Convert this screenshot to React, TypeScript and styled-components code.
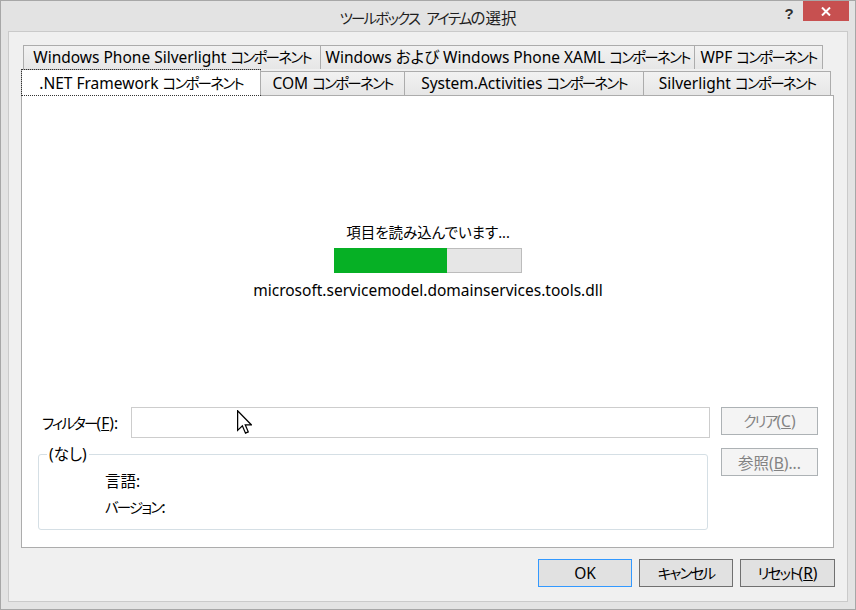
import React from 'react';
import styled, { createGlobalStyle } from 'styled-components';

const GlobalStyle = createGlobalStyle`
  html, body { margin: 0; padding: 0; background: #e3e3e3; }
  body {
    font-family: "Noto Sans", "Noto Sans CJK JP", sans-serif;
    font-size: 15.5px;
    color: #000;
    font-feature-settings: "palt";
  }
  * { box-sizing: border-box; }
`

// katakana in the Windows UI font is much narrower than Noto's, so runs of it get tightened
const Kana = styled.span`
  font-size: 14.5px;
  letter-spacing: -1.8px;
`
const jp = (s: string) => s.split(/([\u30A0-\u30FF]+)/).map((part, i) =>
  i % 2 ? <Kana key={i}>{part}</Kana> : part)

const Window = styled.div`
  width: 856px; height: 610px;
  border: 1px solid #a7a7a7;
  background: #e3e3e3;
  display: flex; flex-direction: column;
`

const TitleBar = styled.div`
  height: 30px; flex: none;
  display: grid;
  > * { grid-area: 1 / 1; }
`
const Title = styled.div`
  justify-self: center; align-self: center;
  padding-top: 2px;
  color: #1e1e1e;
  word-spacing: 3px;
`
const Controls = styled.div`
  justify-self: end; align-self: start;
  display: flex; margin-right: 6px;
`
const HelpButton = styled.div`
  width: 28px; height: 20px;
  display: flex; align-items: center; justify-content: center;
  font-family: "Liberation Sans", sans-serif;
  font-weight: bold; font-size: 15px; color: #303030;
  padding-top: 4px;
`
const CloseButton = styled.div`
  width: 46px; height: 20px;
  background: #c75050;
  display: flex; align-items: center; justify-content: center;
`

const Client = styled.div`
  flex: 1;
  margin: 0 7px 7px;
  border: 1px solid #cacaca;
  background: #f0f0f0;
  padding: 15px 12px 0 12px;
  display: flex; flex-direction: column;
`

// tab strip, two rows like the WinForms multi-row TabControl
const TabRow = styled.div<{ $indent?: number; $h: number; $front?: boolean }>`
  display: flex; align-items: flex-end;
  height: ${p => p.$h}px;
  padding-left: ${p => p.$indent || 0}px;
  position: relative;
  z-index: ${p => p.$front ? 2 : 0};
`
const Tab = styled.div<{ $w: number; $active?: boolean }>`
  flex: none;
  width: ${p => p.$w}px;
  height: ${p => p.$active ? 27 : 24}px;
  padding-top: ${p => p.$active ? 2 : 0}px;
  border: 1px solid #acacac; border-bottom: none;
  background: ${p => p.$active ? '#fff' : 'linear-gradient(#f2f2f2, #e6e6e6)'};
  text-align: center;
  line-height: 23px;
  white-space: nowrap;
  margin-bottom: ${p => p.$active ? -1 : 0}px;
  outline: ${p => p.$active ? '1px dotted #333' : 'none'};
  outline-offset: -1px;
  & + & { margin-left: -1px; }
`

const Panel = styled.div`
  height: 453px; flex: none;
  margin-right: 1px;
  border: 1px solid #acacac;
  background: #fff;
  display: flex; flex-direction: column;
  padding: 0 15px 17px 16px;
`

const Loading = styled.div`
  margin-top: 126px;
  display: flex; flex-direction: column; align-items: center;
`
const LoadText = styled.div<{ $cjk?: boolean }>`
  line-height: 20px;
  font-size: ${p => p.$cjk ? '14.5px' : 'inherit'};
`
const Progress = styled.div`
  width: 188px; height: 25px;
  margin: 6px 0 7px;
  border: 1px solid #bcbcbc;
  background: #e6e6e6;
  display: flex;
`
const ProgressFill = styled.div`
  background: #06b025;
  margin: -1px 0 -1px -1px;
`

const FilterGrid = styled.div`
  margin-top: auto;
  display: grid;
  grid-template-columns: 93px 1fr 108px;
  row-gap: 10px;
`
const FilterLabel = styled.label`
  align-self: center;
  padding-left: 4px;
  white-space: nowrap;
`
const FilterField = styled.div`
  position: relative;
`
const TextBox = styled.input`
  display: block;
  width: 100%; height: 31px;
  border: 1px solid #cdcdcd;
  background: #fff;
  outline: none;
`
const Pointer = styled.svg`
  position: absolute; left: 106px; top: 3px;
`

const Group = styled.fieldset`
  grid-column: 1 / 3;
  margin: -3px 2px 0 0;
  padding: 5px 0 0 8px;
  height: 85px;
  border: 1px solid #d5dfe5;
  border-radius: 3px;
  min-width: 0;
`
const Legend = styled.legend`
  padding: 0 2px;
  line-height: 18px;
`
const Info = styled.div`
  padding-left: 58px;
  line-height: 26px;
`

const Button = styled.button<{ $w: number; $default?: boolean }>`
  width: ${p => p.$w}px; height: 28px;
  font: inherit; font-feature-settings: "palt";
  padding: 0;
  background: #e1e1e1;
  border: 1px solid ${p => p.$default ? '#3399ff' : '#707070'};
  color: #000;
  &:disabled {
    background: #f4f4f4;
    border-color: #adb2b5;
    color: #838383;
  }
`
const SideButton = styled(Button)`
  justify-self: end; align-self: start;
`

const Footer = styled.div`
  display: flex; justify-content: flex-end; gap: 7px;
  margin-top: 11px;
`

const Key = ({ k }: { k: string }) => <span style={{ textDecoration: 'underline' }}>{k}</span>

const row1 = [
  { text: 'Windows Phone Silverlight コンポーネント', w: 298 },
  { text: 'Windows および Windows Phone XAML コンポーネント', w: 375 },
  { text: 'WPF コンポーネント', w: 129 },
]
const row2 = [
  { text: '.NET Framework コンポーネント', w: 240, active: true },
  { text: 'COM コンポーネント', w: 145 },
  { text: 'System.Activities コンポーネント', w: 240 },
  { text: 'Silverlight コンポーネント', w: 188 },
]

export default function App() {
  const progress = 61
  return <>
    <GlobalStyle />
    <Window>
      <TitleBar>
        <Title>{jp('ツールボックス アイテムの選択')}</Title>
        <Controls>
          <HelpButton>?</HelpButton>
          <CloseButton>
            <svg width="10" height="9" viewBox="0 0 10 9">
              <path d="M1 0.5 L9 8.5 M9 0.5 L1 8.5" stroke="#fff" strokeWidth="2" />
            </svg>
          </CloseButton>
        </Controls>
      </TitleBar>

      <Client>
        <TabRow $indent={2} $h={22}>
          {row1.map((t, i) => <Tab key={i} $w={t.w}>{jp(t.text)}</Tab>)}
        </TabRow>
        <TabRow $h={26} $front>
          {row2.map((t, i) =>
            <Tab key={i} $w={t.w} $active={t.active}>{jp(t.text)}</Tab>)}
        </TabRow>

        <Panel>
          <Loading>
            <LoadText $cjk>項目を読み込んでいます...</LoadText>
            <Progress>
              <ProgressFill style={{ width: `${progress}%` }} />
            </Progress>
            <LoadText>microsoft.servicemodel.domainservices.tools.dll</LoadText>
          </Loading>

          <FilterGrid>
            <FilterLabel>{jp('フィルター')}(<Key k="F" />):</FilterLabel>
            <FilterField>
              <TextBox readOnly />
              <Pointer width="15" height="24" viewBox="0 0 12 19">
                <path d="M0.5 0.5 L0.5 16.2 L4.3 12.6 L6.8 18.4 L9 17.4 L6.6 11.7 L11.4 11.7 Z"
                  fill="#fff" stroke="#000" strokeWidth="1" strokeLinejoin="miter" />
              </Pointer>
            </FilterField>
            <SideButton $w={97} disabled>{jp('クリア')}(<Key k="C" />)</SideButton>

            <Group>
              <Legend>(なし)</Legend>
              <Info>
                <div>言語:</div>
                <div>{jp('バージョン')}:</div>
              </Info>
            </Group>
            <SideButton $w={97} disabled>参照(<Key k="B" />)...</SideButton>
          </FilterGrid>
        </Panel>

        <Footer>
          <Button $w={94} $default>OK</Button>
          <Button $w={94}>{jp('キャンセル')}</Button>
          <Button $w={95}>{jp('リセット')}(<Key k="R" />)</Button>
        </Footer>
      </Client>
    </Window>
  </>
}
